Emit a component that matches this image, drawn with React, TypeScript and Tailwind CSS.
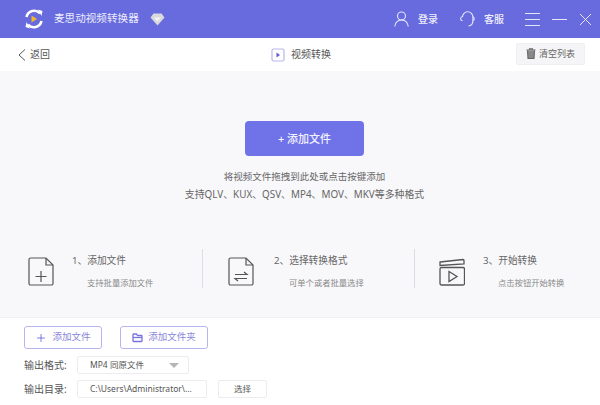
import { Plus } from "lucide-react";

const FONT = "font-['Noto_Sans','Noto_Sans_CJK_SC',sans-serif]";

function Logo() {
  return (
    <svg width="22" height="22" viewBox="0 0 22 22" fill="none">
      <path d="M3.500 9a7.800 7.800 0 0 1 13.500-3.500" stroke="#fff" strokeWidth="2.600" />
      <path d="M18.500 13a7.800 7.800 0 0 1-13.500 3.500" stroke="#fff" strokeWidth="2.600" />
      <path d="M15 1.500l4.500 1.500-1 5z" fill="#fff" />
      <path d="M7 20.500l-4.500-1.500 1-5z" fill="#fff" />
      <path d="M8.500 7.500l5.500 3.500-5.500 3.500z" fill="#f6b42c" />
    </svg>
  );
}

function Diamond() {
  return (
    <svg width="15" height="13" viewBox="0 0 15 13">
      <path d="M3.500 0.500h8l3 4-7 8-7-8z" fill="#d9d9dc" />
      <path d="M4 4.500h7l-3.500 4z" fill="#f4f4f6" />
    </svg>
  );
}

function UserIcon() {
  return (
    <svg width="15" height="16" viewBox="0 0 15 16" fill="none" stroke="#e6e6fa" strokeWidth="1.100">
      <circle cx="7.500" cy="5" r="4" />
      <path d="M0.700 15.500c.6-3.800 3.300-6.500 6.800-6.500s6.200 2.700 6.800 6.500" />
    </svg>
  );
}

function HeadsetIcon() {
  return (
    <svg width="15" height="16" viewBox="0 0 15 16" fill="none" stroke="#e6e6fa" strokeWidth="1.100">
      <path d="M2.500 6a5.200 5.200 0 0 1 10.400 0v4c0 2.800-1.800 4.600-4.400 5" />
      <path d="M2.500 5.500C1.200 5.800.6 6.600.6 7.700s.6 1.900 1.900 2.100" />
      <path d="M12.900 5.800c.8.300 1.300 1 1.300 2s-.5 1.700-1.300 2" />
    </svg>
  );
}

function BackIcon() {
  return (
    <svg width="8" height="12" viewBox="0 0 8 12" fill="none" stroke="#555" strokeWidth="1">
      <path d="M7 .5L1 6l6 5.500" />
    </svg>
  );
}

function PlayBadge() {
  return (
    <svg width="14" height="14" viewBox="0 0 14 14" fill="none">
      <rect x="1" y="1" width="12" height="12" rx="1.500" fill="#fff" stroke="#b9b5f0" strokeWidth="1.200" />
      <path d="M5.500 4.500l3.500 2.500-3.500 2.500z" fill="#5f5bd8" />
    </svg>
  );
}

function TrashIcon() {
  return (
    <svg width="10" height="11" viewBox="0 0 10 11" fill="none" stroke="#666" strokeWidth="1.100">
      <path d="M0.500 2h9M3.500 2V.8h3V2" />
      <path d="M1.500 2.500l.5 8h6l.5-8" fill="#8a8a8a" />
    </svg>
  );
}

function FileShape({ children }: { children: React.ReactNode }) {
  return (
    <svg width="26" height="29" viewBox="0 0 26 29" fill="none" stroke="#555" strokeWidth="1.200">
      <path d="M2.500 1h15.500l7 7v18.500a1.500 1.500 0 0 1-1.500 1.500h-21a1.500 1.500 0 0 1-1.500-1.500v-24a1.500 1.500 0 0 1 1.500-1.500z" />
      <path d="M18 1v7h7" />
      {children}
    </svg>
  );
}

function ClapperIcon() {
  return (
    <svg width="26" height="29" viewBox="0 0 26 29" fill="none" stroke="#555" strokeWidth="1.300">
      <path d="M1 5l23-2.500a1 1 0 0 1 1 1v3.500l-24 1.500z" />
      <rect x="1" y="10.500" width="24.500" height="17.500" rx="1.500" />
      <path d="M10 14.500l8 5-8 5z" />
    </svg>
  );
}

function FolderIcon() {
  return (
    <svg width="11" height="10" viewBox="0 0 11 10" fill="none" stroke="#7772e0" strokeWidth="1.300">
      <path d="M1 1.500a.5.5 0 0 1 .5-.5h3l1 1.500h4a.5.5 0 0 1 .5.5v5a.5.5 0 0 1-.5.5h-8a.5.5 0 0 1-.5-.5z" />
      <path d="M1 4.500h9" />
    </svg>
  );
}

const steps = [
  {
    title: "1、添加文件",
    sub: "支持批量添加文件",
    width: "w-[203px]",
    pad: "pl-[28px]",
    gap: "gap-[18px]",
    icon: (
      <FileShape>
        <path d="M13 14v11M7.500 19.500h11" />
      </FileShape>
    ),
  },
  {
    title: "2、选择转换格式",
    sub: "可单个或者批量选择",
    width: "w-[212px]",
    pad: "pl-[25px]",
    gap: "gap-[20px]",
    icon: (
      <FileShape>
        <path d="M7 17.500h12l-3-2.500M19 21.500h-12l3 2.500" />
      </FileShape>
    ),
  },
  {
    title: "3、开始转换",
    sub: "点击按钮开始转换",
    width: "flex-1",
    pad: "pl-[24px]",
    gap: "gap-[18px]",
    icon: <ClapperIcon />,
  },
];

export default function App() {
  return (
    <div className={`${FONT} w-[600px] h-[405px] overflow-hidden flex flex-col bg-white text-[#555]`}>
      <header className="h-[38px] shrink-0 bg-[#676bde] flex items-center pl-[23px] pr-[8px] text-white">
        <Logo />
        <span className="ml-[9px] text-[10.6px] text-[#ecebfb]">麦思动视频转换器</span>
        <span className="ml-[11px] flex">
          <Diamond />
        </span>
        <div className="ml-auto flex items-center">
          <UserIcon />
          <span className="ml-[9px] text-[10px] font-medium text-[#f0f0fc]">登录</span>
          <span className="ml-[22px] flex">
            <HeadsetIcon />
          </span>
          <span className="ml-[9px] text-[10px] font-medium text-[#f0f0fc]">客服</span>
          <div className="ml-[21px] w-[15px] flex flex-col gap-[5px]">
            <span className="h-px bg-[#e6e6fa]" />
            <span className="h-px bg-[#e6e6fa]" />
            <span className="h-px bg-[#e6e6fa]" />
          </div>
          <span className="ml-[12px] w-[15px] h-px bg-[#e6e6fa]" />
          <svg className="ml-[12px]" width="13" height="13" viewBox="0 0 13 13" stroke="#e6e6fa" strokeWidth="1">
            <path d="M1 1l11 11M12 1L1 12" />
          </svg>
        </div>
      </header>

      <nav className="h-[33px] shrink-0 flex items-center pl-[18px] pr-[15px]">
        <BackIcon />
        <span className="text-[10px] ml-[4px]">返回</span>
        <div className="flex-1 flex justify-center items-center gap-[6px] pl-[36px]">
          <PlayBadge />
          <span className="text-[10px]">视频转换</span>
        </div>
        <button className="w-[69px] h-[22px] mt-[-2px] rounded-[2px] bg-[#f5f5f7] border border-[#f0f0f2] flex items-center justify-center gap-[3px] text-[9px] text-[#666]">
          <TrashIcon />
          清空列表
        </button>
      </nav>

      <main className="h-[246px] shrink-0 bg-[#f8f8fb] flex flex-col">
        <div className="pl-[9px] flex flex-col items-center">
          <button className="mt-[50px] w-[119px] h-[35px] pt-[1px] rounded-[4px] bg-[#7072e8] text-[#f2f2ff] text-[11px] font-medium">
            + 添加文件
          </button>
          <p className="mt-[13px] text-[9.5px] leading-[16px] text-[#666]">将视频文件拖拽到此处或点击按键添加</p>
          <p className="mt-[1px] text-[9.9px] leading-[16px] text-[#666]">支持QLV、KUX、QSV、MP4、MOV、MKV等多种格式</p>
        </div>

        <div className="mt-[47px] w-full flex">
          {steps.map((s, i) => (
            <div
              key={s.title}
              className={`${s.width} ${s.pad} ${s.gap} h-[39px] flex items-center ${i < 2 ? "border-r border-[#dedee2]" : ""}`}
            >
              <span className="flex mt-[6px]">{s.icon}</span>
              <div className="mt-[6px]">
                <div className="text-[9.7px] leading-[14px] text-[#666]">{s.title}</div>
                <div className="mt-[9px] pl-[15px] text-[8.3px] leading-[12px] text-[#888]">{s.sub}</div>
              </div>
            </div>
          ))}
        </div>
      </main>

      <footer className="flex-1 pl-[24px] pt-[9px] border-t border-[#f0f0f2]">
        <div className="flex gap-[18px] -mt-[1px]">
          <button className="w-[78px] h-[23px] rounded-[3px] border border-[#b7b4f2] flex items-center justify-center gap-[5px] text-[9.5px] text-[#8a88d8]">
            <Plus size={12} strokeWidth={1.800} className="text-[#6f6be0]" />
            添加文件
          </button>
          <button className="w-[88px] h-[23px] rounded-[3px] border border-[#b7b4f2] flex items-center justify-center gap-[5px] text-[9.5px] text-[#8a88d8]">
            <FolderIcon />
            添加文件夹
          </button>
        </div>
        <div className="mt-[7px] flex items-center">
          <span className="w-[53px] text-[10px]">输出格式:</span>
          <div className="w-[112px] h-[18px] rounded-[2px] border border-[#ececef] flex items-center pl-[12px] pr-[9px] text-[8.5px]">
            MP4 同原文件
            <span className="ml-auto w-0 h-0 border-x-[5px] border-x-transparent border-t-[5px] border-t-[#b5b5b8]" />
          </div>
        </div>
        <div className="mt-[6px] flex items-center">
          <span className="w-[53px] text-[10px]">输出目录:</span>
          <div className="w-[130px] h-[18px] rounded-[2px] border border-[#ececef] flex items-center pl-[12px] text-[8.5px]">
            C:\Users\Administrator\...
          </div>
          <button className="ml-[11px] w-[49px] h-[18px] rounded-[2px] border border-[#ececef] text-[8.5px]">选择</button>
        </div>
      </footer>
    </div>
  );
}
